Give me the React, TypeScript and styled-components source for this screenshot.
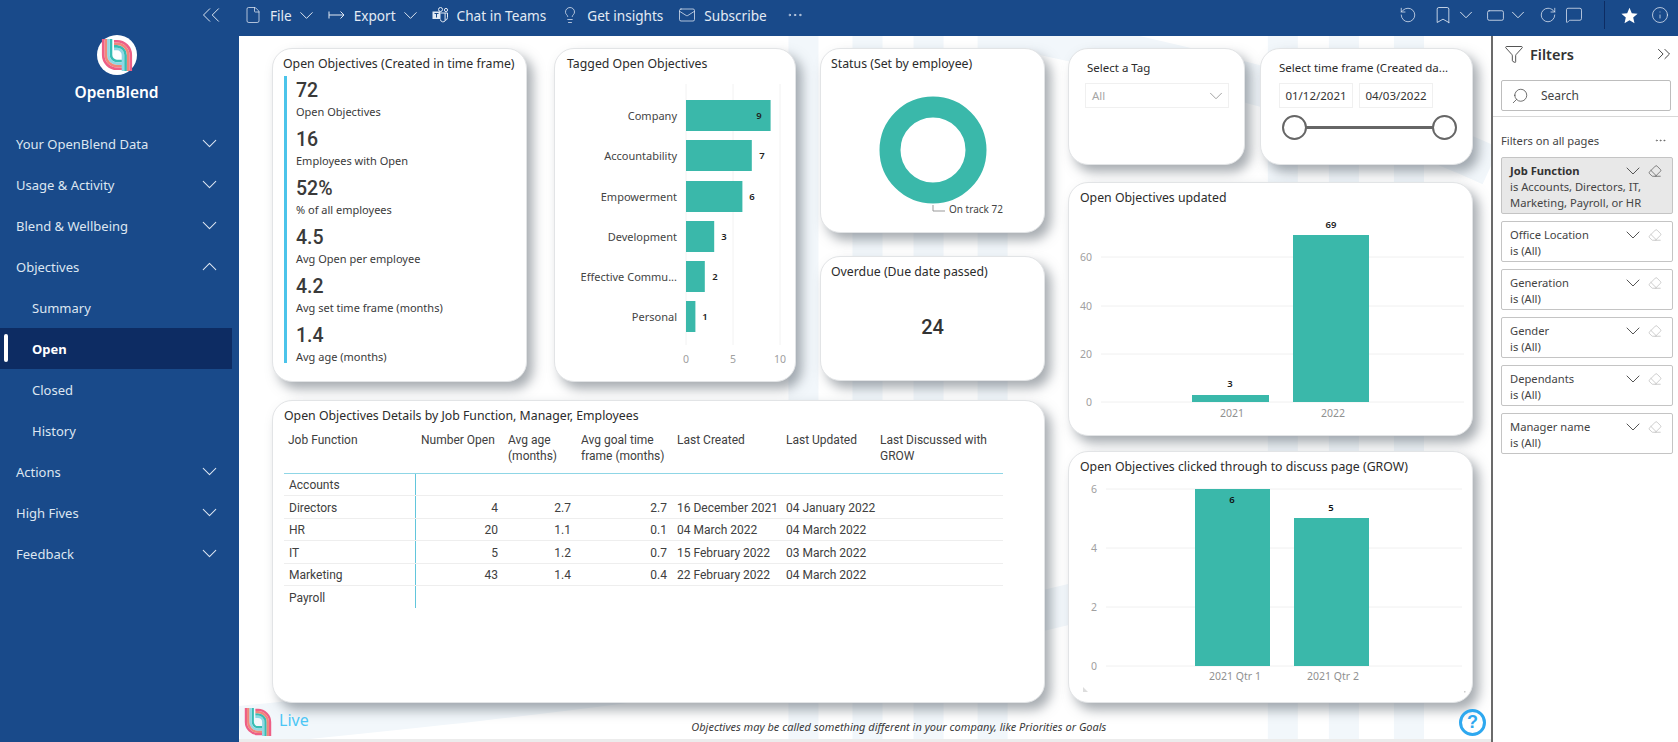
import React from 'react';
import styled, { createGlobalStyle } from 'styled-components';
import {
  Bookmark, ChevronDown, ChevronUp, ChevronsLeft, ChevronsRight, Eraser, File, Filter, Info, Lightbulb, Mail,
  MessageSquare, MoreHorizontal, RectangleHorizontal, RotateCcw, RotateCw, Search,
} from 'lucide-react';

const TEAL = '#3ab8aa';
const FONT = '"Noto Sans", "Open Sans", sans-serif';

const Global = createGlobalStyle`
  html, body { margin: 0; padding: 0; background: #fff; }
  body { font-family: ${FONT}; overflow: hidden; }
  * { box-sizing: border-box; }
`;

const Page = styled.div`display: flex; width: 1678px; height: 742px; overflow: hidden;`;

/* ---------- sidebar ---------- */
const Sidebar = styled.aside`
  width: 239px; flex: none; background: #194a8a; color: #e6edf5; display: flex; flex-direction: column;
`;
const CollapseRow = styled.div`height: 36px; display: flex; align-items: center; justify-content: flex-end; padding: 0 13px 6px 0; color: #dbe5f1;`;
const Brand = styled.div`height: 72px; margin-top: -1px; display: flex; flex-direction: column; align-items: center; margin-right: 6px;`;
const BrandName = styled.div`font-size: 15.5px; font-weight: 600; color: #fff; line-height: 22px; margin-top: 6px;`;
const Nav = styled.nav`margin-top: 16px; display: flex; flex-direction: column;`;
const NavRow = styled.div<{ $sub?: boolean; $active?: boolean }>`
  position: relative; height: 41px; width: 232px; display: flex; align-items: center; justify-content: space-between;
  padding: 0 10px 0 ${p => (p.$sub ? '32px' : '16px')};
  font-size: 13px; font-weight: ${p => (p.$active ? 700 : 400)}; color: ${p => (p.$active ? '#fff' : '#dde6f1')};
  background: ${p => (p.$active ? '#0d2c63' : 'transparent')};
`;
const ActiveMark = styled.span`position: absolute; left: 4px; top: 6px; width: 4px; height: 28px; border-radius: 2px; background: #fff;`;

/* ---------- toolbar ---------- */
const Right = styled.div`flex: 1; min-width: 0; display: flex; flex-direction: column;`;
const Toolbar = styled.header`height: 36px; flex: none; background: #194a8a; display: flex; align-items: center; padding: 0 9px 6px 5px; color: #e3eaf4;`;
const ToolGroup = styled.div<{ $ml?: number }>`display: flex; align-items: center; margin-right: 15px; gap: 8px; margin-left: ${p => p.$ml ?? 0}px;`;
const ToolLabel = styled.span`font-size: 13.6px; white-space: nowrap;`;
const ToolChevron = styled(ChevronDown)`margin: 0 -5px; flex: none;`;
const ToolRight = styled.div`margin-left: auto; display: flex; align-items: center;`;
const ToolIcon = styled.span<{ $ml: number }>`display: flex; margin-left: ${p => p.$ml}px;`;
const ToolDivider = styled.span`width: 1px; height: 28px; background: #0d2c63; margin-left: 21px;`;

/* ---------- body ---------- */
const Body = styled.div`flex: 1; min-height: 0; display: flex;`;
const Main = styled.main`
  position: relative; flex: 1; min-width: 0; display: flex; flex-direction: column; background: #fff; border-bottom: 3px solid #ececec;
`;
const Watermark = styled.svg`position: absolute; inset: 0; width: 100%; height: 100%;`;
const Canvas = styled.div`position: relative; display: flex; gap: 23px; padding: 12px 0 0 33px; height: 667px;`;
const LeftBlock = styled.div`display: flex; flex-direction: column; gap: 18px; width: 773px;`;
const TopRow = styled.div`display: flex; height: 334px;`;
const Stack = styled.div`display: flex; flex-direction: column; gap: 23px; width: 225px;`;
const RightBlock = styled.div`display: flex; flex-direction: column; width: 405px;`;
const SlicerRow = styled.div`display: flex; gap: 15px; height: 117px; margin-bottom: 17px;`;

const Card = styled.section<{ $w?: number; $h?: number; $mb?: number; $mr?: number }>`
  display: flex; flex-direction: column; background: #fff; border: 1px solid #e2e4e6; border-radius: 20px; overflow: visible;
  box-shadow: 6px 7px 12px rgba(80, 90, 100, 0.5);
  ${p => (p.$w ? `width: ${p.$w}px; flex: none;` : '')}
  ${p => (p.$h ? `height: ${p.$h}px; flex: none;` : '')}
  ${p => (p.$mb ? `margin-bottom: ${p.$mb}px;` : '')}
  ${p => (p.$mr ? `margin-right: ${p.$mr}px;` : '')}
`;
const CardTitle = styled.h3<{ $pl?: number }>`
  margin: 5px 0 0; padding-left: ${p => p.$pl ?? 10}px; height: 20px; line-height: 20px; font-size: 12.3px; font-weight: 400; color: #2b2b2b; white-space: nowrap;
`;
const Chart = styled.svg`display: block; font-family: ${FONT};`;

const Kpis = styled.div`margin: 2px 0 0 11px; padding-left: 9px; height: 287px; border-left: 3px solid #4cc4ea; display: flex; flex-direction: column; gap: 7px;`;
const Kpi = styled.div`height: 42px; padding-top: 2px;`;
const KpiValue = styled.div`font-family: Roboto, sans-serif; font-size: 19.5px; font-weight: 500; line-height: 26px; color: #3a3a3a;`;
const KpiLabel = styled.div`font-size: 11px; line-height: 16px; color: #3a3a3a;`;

const BigNumber = styled.div`flex: 1; display: flex; align-items: center; justify-content: center; font-family: Roboto, sans-serif; font-size: 20px; font-weight: 500; color: #333; padding-bottom: 8px;`;

const SlicerTitle = styled(CardTitle)`margin-top: 9px; font-size: 11.5px; padding-left: 18px;`;
const Dropdown = styled.div`
  margin: 5px 15px 0 16px; height: 25px; border: 1px solid #f0f0f0; display: flex; align-items: center; justify-content: space-between;
  padding: 0 1px 0 6px; color: #a6a6a6; font-size: 11.5px;
`;
const Dates = styled.div`display: flex; gap: 6px; margin: 5px 0 0 18px;`;
const DateBox = styled.div`width: 74px; height: 25px; border: 1px solid #f0f0f0; display: flex; align-items: center; justify-content: center; font-size: 11.5px; color: #333;`;
const Slider = styled.div`position: relative; margin: 18px 0 0 33px; width: 151px; height: 3px; background: #666;`;
const Handle = styled.span<{ $end?: boolean }>`
  position: absolute; top: -11px; ${p => (p.$end ? 'right: -12px;' : 'left: -12px;')}
  width: 25px; height: 25px; border-radius: 50%; background: #fff; border: 2px solid #666;
`;

/* ---------- table ---------- */
const TableCard = styled(Card)`flex: 1; height: 303px;`;
const TableTitle = styled(CardTitle)`padding-left: 11px; font-size: 12.3px;`;
const DataTable = styled.table`
  margin: 3px 0 0 11px; width: 719px; table-layout: fixed; border-collapse: collapse; font-family: Roboto, sans-serif; font-size: 12px; color: #404040;
`;
const Th = styled.th<{ $w: number }>`
  width: ${p => p.$w}px; height: 44px; vertical-align: top; text-align: left; font-weight: 400; line-height: 15.5px; padding: 4px 4px 0 4px;
  border-bottom: 1px solid #8fd6e6; color: #404040;
  &:nth-child(2) { padding-left: 6px; }
`;
const Td = styled.td<{ $num?: boolean; $first?: boolean }>`
  height: 22.5px; padding: 2px 6px 0 4px; white-space: nowrap; overflow: visible; text-align: ${p => (p.$num ? 'right' : 'left')};
  border-bottom: 1px solid #eeeeee; ${p => (p.$first ? 'border-right: 1px solid #62c6dc; padding-left: 5px;' : '')}
`;
const LastRow = styled.tr`td { border-bottom: none; }`;

/* ---------- footer ---------- */
const Footer = styled.div`position: relative; flex: 1; display: flex; align-items: center; padding: 2px 5px 0 5px;`;
const LiveLabel = styled.span`margin: 0 0 5px 7px; font-size: 16px; color: #4cc6f5;`;
const Note = styled.div`flex: 1; text-align: center; padding-left: 30px; margin-top: 9px; font-size: 11px; font-style: italic; color: #3a3a3a;`;
const Help = styled.span`
  width: 27px; height: 27px; border-radius: 50%; border: 3px solid #2ea8ef; color: #2ea8ef; font-size: 18px; font-weight: 700; line-height: 21px; text-align: center; font-family: "Liberation Sans", sans-serif;
`;

/* ---------- filters ---------- */
const Pane = styled.aside`width: 187px; flex: none; background: #fff; border-left: 2px solid #6b6b6b; display: flex; flex-direction: column;`;
const PaneHead = styled.div`height: 36px; display: flex; align-items: center; padding: 0 3px 0 11px; color: #333;`;
const PaneTitle = styled.div`margin-left: 6px; font-size: 14.5px; font-weight: 600; flex: 1; color: #333;`;
const SearchBox = styled.div`
  margin: 8px 7px 0 8px; height: 31px; border: 1px solid #bdbdbd; border-radius: 2px; display: flex; align-items: center; gap: 12px; padding-left: 9px; font-size: 12px; color: #444;
`;
const PaneRule = styled.div`height: 1px; background: #d8d8d8; margin-top: 5px;`;
const PaneSection = styled.div`display: flex; align-items: center; justify-content: space-between; margin: 14px 11px 0 8px; height: 18px; font-size: 11.2px; color: #444;`;
const FilterList = styled.div`display: flex; flex-direction: column; gap: 7px; margin: 8px 5px 0 8px;`;
const FilterCard = styled.div<{ $active?: boolean }>`
  position: relative; height: ${p => (p.$active ? 57 : 41)}px; padding: 4px 10px 0 8px; font-size: 11.2px; line-height: 16px; color: #444; border-radius: 2px;
  border: 1px solid #c4c4c4; background: ${p => (p.$active ? '#e8e8e8' : '#fff')};
`;
const FilterName = styled.div<{ $active?: boolean }>`display: flex; justify-content: space-between; align-items: center; height: 17px; font-weight: ${p => (p.$active ? 700 : 400)}; color: ${p => (p.$active ? '#333' : '#444')};`;
const FilterIcons = styled.span<{ $dark?: boolean }>`display: flex; align-items: center; gap: 3px; color: #555; svg:last-child { color: ${p => (p.$dark ? '#333' : '#aaa')}; }`;
const FilterChevron = styled(ChevronDown)`margin: -4px 0;`;

/* ---------- drawings ---------- */
function LogoStripes() {
  const left = [['#37bdb4', 6], ['#8ed8e4', 8.6], ['#f0877a', 11.2], ['#ee5f86', 13.8]] as const;
  const arch = [['#8ed8e4', 6], ['#37bdb4', 8.6], ['#f0877a', 11.2], ['#ee5f86', 13.8]] as const;
  return (
    <g fill="none" strokeWidth="2.6">
      {left.map(([c, r]) => <path key={r} stroke={c} d={`M${-r} -16 L${-r} 0 A${r} ${r} 0 0 0 0 ${r} L5 ${r}`} />)}
      {arch.map(([c, r]) => <path key={r} stroke={c} d={`M-3 ${-r} L0 ${-r} A${r} ${r} 0 0 1 ${r} 0 L${r} 16`} />)}
    </g>
  );
}
function Logo() {
  return (
    <svg width="40" height="40" viewBox="-20 -20 40 40" style={{ display: 'block' }}>
      <circle cx="0" cy="0" r="20" fill="#fff" />
      <LogoStripes />
    </svg>
  );
}
function LiveLogo() {
  return (
    <svg width="28" height="28" viewBox="-16 -16 32 32" style={{ display: 'block' }}><LogoStripes /></svg>
  );
}
function ExportIcon() {
  return (
    <svg width="18" height="12" viewBox="0 0 18 12" fill="none" stroke="currentColor" strokeWidth="1">
      <path d="M1 2.5v7M1 6h15M12.5 2.5 16 6l-3.5 3.5" />
    </svg>
  );
}
function TeamsIcon() {
  return (
    <svg width="17" height="16" viewBox="0 0 17 16" fill="none" stroke="currentColor" strokeWidth="1">
      <rect x="0.5" y="4.5" width="8" height="7.5" fill="currentColor" stroke="none" />
      <path d="M2.5 6.5h4M4.5 6.5v4" stroke="#194a8a" />
      <circle cx="8.5" cy="2.5" r="2" />
      <circle cx="14" cy="3" r="1.6" />
      <path d="M8.5 6h7v4.5a3 3 0 0 1-2.4 2.9M8.5 12.5v.5a2.6 2.6 0 0 0 4.6.8V6" />
    </svg>
  );
}
function StarIcon() {
  return (
    <svg width="17" height="17" viewBox="0 0 17 17" fill="#fff">
      <path d="M8.5 0.8 10.8 6.2 16.6 6.7 12.2 10.5 13.5 16.2 8.5 13.2 3.5 16.2 4.8 10.5 0.4 6.7 6.2 6.2Z" />
    </svg>
  );
}
const stroke = 1;

/* ---------- data ---------- */
const NAV: { label: string; sub?: boolean; active?: boolean; open?: boolean; leaf?: boolean }[] = [
  { label: 'Your OpenBlend Data' }, { label: 'Usage & Activity' }, { label: 'Blend & Wellbeing' }, { label: 'Objectives', open: true },
  { label: 'Summary', sub: true, leaf: true }, { label: 'Open', sub: true, leaf: true, active: true }, { label: 'Closed', sub: true, leaf: true }, { label: 'History', sub: true, leaf: true },
  { label: 'Actions' }, { label: 'High Fives' }, { label: 'Feedback' },
];
const KPIS = [
  ['72', 'Open Objectives'], ['16', 'Employees with Open'], ['52%', '% of all employees'],
  ['4.5', 'Avg Open per employee'], ['4.2', 'Avg set time frame (months)'], ['1.4', 'Avg age (months)'],
];
const TAGS: [string, number, number, number][] = [
  ['Company', 9, 100, 759], ['Accountability', 7, 140, 762], ['Empowerment', 6, 181, 752],
  ['Development', 3, 221, 724], ['Effective Commu...', 2, 261, 715], ['Personal', 1, 301, 705],
];
const COLS: [React.ReactNode, number][] = [
  ['Job Function', 131], ['Number Open', 89], [<>Avg age<br />(months)</>, 73],
  [<>Avg goal time<br />frame (months)</>, 96], ['Last Created', 109], ['Last Updated', 94], [<>Last Discussed with<br />GROW</>, 127],
];
const ROWS = [
  ['Accounts', '', '', '', '', '', ''],
  ['Directors', '4', '2.7', '2.7', '16 December 2021', '04 January 2022', ''],
  ['HR', '20', '1.1', '0.1', '04 March 2022', '04 March 2022', ''],
  ['IT', '5', '1.2', '0.7', '15 February 2022', '03 March 2022', ''],
  ['Marketing', '43', '1.4', '0.4', '22 February 2022', '04 March 2022', ''],
];
const FILTERS = ['Office Location', 'Generation', 'Gender', 'Dependants', 'Manager name'];
const STRIPES = [803 - 239, 867 - 239, 928 - 239, 992 - 239, 1282 - 239, 1343 - 239, 1408 - 239];

export default function App() {
  return (
    <Page>
      <Global />
      <Sidebar>
        <CollapseRow><ChevronsLeft size={30} strokeWidth={0.8} /></CollapseRow>
        <Brand>
          <Logo />
          <BrandName>OpenBlend</BrandName>
        </Brand>
        <Nav>
          {NAV.map(n => (
            <NavRow key={n.label} $sub={n.sub} $active={n.active}>
              {n.active && <ActiveMark />}
              {n.label}
              {!n.leaf && (n.open ? <ChevronUp size={25} strokeWidth={stroke} /> : <ChevronDown size={25} strokeWidth={stroke} />)}
            </NavRow>
          ))}
        </Nav>
      </Sidebar>

      <Right>
        <Toolbar>
          <ToolGroup><File size={18} strokeWidth={stroke} /><ToolLabel>File</ToolLabel><ToolChevron size={23} strokeWidth={stroke} /></ToolGroup>
          <ToolGroup><ExportIcon /><ToolLabel>Export</ToolLabel><ToolChevron size={23} strokeWidth={stroke} /></ToolGroup>
          <ToolGroup><TeamsIcon /><ToolLabel>Chat in Teams</ToolLabel></ToolGroup>
          <ToolGroup><Lightbulb size={18} strokeWidth={stroke} /><ToolLabel>Get insights</ToolLabel></ToolGroup>
          <ToolGroup><Mail size={18} strokeWidth={stroke} /><ToolLabel>Subscribe</ToolLabel></ToolGroup>
          <ToolGroup $ml={4}><MoreHorizontal size={18} strokeWidth={stroke} /></ToolGroup>
          <ToolRight>
            <ToolIcon $ml={0}><RotateCcw size={18} strokeWidth={stroke} /></ToolIcon>
            <ToolIcon $ml={16}><Bookmark size={20} strokeWidth={stroke} /></ToolIcon>
            <ToolIcon $ml={2}><ChevronDown size={22} strokeWidth={stroke} /></ToolIcon>
            <ToolIcon $ml={9}><RectangleHorizontal size={19} strokeWidth={stroke} /></ToolIcon>
            <ToolIcon $ml={2}><ChevronDown size={22} strokeWidth={stroke} /></ToolIcon>
            <ToolIcon $ml={10}><RotateCw size={18} strokeWidth={stroke} /></ToolIcon>
            <ToolIcon $ml={8}><MessageSquare size={18} strokeWidth={stroke} /></ToolIcon>
            <ToolDivider />
            <ToolIcon $ml={16}><StarIcon /></ToolIcon>
            <ToolIcon $ml={13}><Info size={18} strokeWidth={stroke} /></ToolIcon>
          </ToolRight>
        </Toolbar>

        <Body>
          <Main>
            <Watermark viewBox="0 0 1251 703" preserveAspectRatio="none" fill="none" stroke="#f2f7fb" strokeWidth="30">
              {STRIPES.map(x => <path key={x} d={`M${x} 0V703`} />)}
              <path d="M760 -10C900 20 1100 60 1251 130" strokeWidth="40" />
              <path d="M0 690C300 660 700 620 1000 520" strokeWidth="40" />
            </Watermark>
            <Canvas>
              <LeftBlock>
                <TopRow>
                  <Card $w={255} $mr={27}>
                    <CardTitle>Open Objectives (Created in time frame)</CardTitle>
                    <Kpis>
                      {KPIS.map(([v, l]) => (
                        <Kpi key={l}><KpiValue>{v}</KpiValue><KpiLabel>{l}</KpiLabel></Kpi>
                      ))}
                    </Kpis>
                  </Card>
                  <Card $w={242} $mr={24}>
                    <CardTitle $pl={12}>Tagged Open Objectives</CardTitle>
                    <Chart width="240" height="307" viewBox="555 74 240 307">
                      {[686, 733, 780].map(x => <line key={x} x1={x} x2={x} y1="84" y2="345" stroke="#f2f2f2" />)}
                      {TAGS.map(([label, v, y, lx]) => (
                        <g key={label}>
                          <rect x="686" y={y} width={v * 9.4} height="31" fill={TEAL} />
                          <text x="677" y={y + 20} textAnchor="end" fontSize="11" fill="#444">{label}</text>
                          <text x={lx} y={y + 19} textAnchor="middle" fontSize="9.5" fontWeight="600" fill="#222">{v}</text>
                        </g>
                      ))}
                      {[[686, '0'], [733, '5'], [780, '10']].map(([x, t]) => (
                        <text key={t} x={x} y="363" textAnchor="middle" fontSize="10.5" fill="#a0a0a0">{t}</text>
                      ))}
                    </Chart>
                  </Card>
                  <Stack>
                    <Card $h={185}>
                      <CardTitle>Status (Set by employee)</CardTitle>
                      <Chart width="223" height="158" viewBox="821 74 223 158">
                        <circle cx="933" cy="150" r="43" fill="none" stroke={TEAL} strokeWidth="21" />
                        <path d="M933 205v6h12" fill="none" stroke="#999" />
                        <text x="949" y="213" fontSize="10" fill="#444">On track 72</text>
                      </Chart>
                    </Card>
                    <Card $h={125}>
                      <CardTitle>Overdue (Due date passed)</CardTitle>
                      <BigNumber>24</BigNumber>
                    </Card>
                  </Stack>
                </TopRow>
                <TableCard>
                  <TableTitle>Open Objectives Details by Job Function, Manager, Employees</TableTitle>
                  <DataTable>
                    <thead>
                      <tr>{COLS.map(([h, w], i) => <Th key={i} $w={w}>{h}</Th>)}</tr>
                    </thead>
                    <tbody>
                      {ROWS.map(r => (
                        <tr key={r[0]}>
                          {r.map((c, i) => <Td key={i} $first={i === 0} $num={i > 0 && i < 4}>{c}</Td>)}
                        </tr>
                      ))}
                      <LastRow>
                        <Td $first>Payroll</Td><Td /><Td /><Td /><Td /><Td /><Td />
                      </LastRow>
                    </tbody>
                  </DataTable>
                </TableCard>
              </LeftBlock>

              <RightBlock>
                <SlicerRow>
                  <Card $w={177}>
                    <SlicerTitle>Select a Tag</SlicerTitle>
                    <Dropdown>All<ChevronDown size={22} strokeWidth={stroke} color="#999" /></Dropdown>
                  </Card>
                  <Card $w={213}>
                    <SlicerTitle>Select time frame (Created da...</SlicerTitle>
                    <Dates><DateBox>01/12/2021</DateBox><DateBox>04/03/2022</DateBox></Dates>
                    <Slider><Handle /><Handle $end /></Slider>
                  </Card>
                </SlicerRow>
                <Card $h={254} $mb={15}>
                  <CardTitle $pl={11}>Open Objectives updated</CardTitle>
                  <Chart width="403" height="227" viewBox="1069 208 403 227">
                    {[[257, '60'], [306, '40'], [354, '20'], [402, '0']].map(([y, t]) => (
                      <g key={t}>
                        <line x1="1101" x2="1464" y1={y} y2={y} stroke="#f0f0f0" />
                        <text x="1092" y={Number(y) + 4} textAnchor="end" fontSize="10.5" fill="#a0a0a0">{t}</text>
                      </g>
                    ))}
                    <rect x="1192" y="395" width="77" height="7" fill={TEAL} />
                    <rect x="1293" y="235" width="76" height="167" fill={TEAL} />
                    <text x="1230" y="387" textAnchor="middle" fontSize="9.5" fontWeight="600" fill="#222">3</text>
                    <text x="1331" y="228" textAnchor="middle" fontSize="9.5" fontWeight="600" fill="#222">69</text>
                    <text x="1232" y="417" textAnchor="middle" fontSize="10.5" fill="#909090">2021</text>
                    <text x="1333" y="417" textAnchor="middle" fontSize="10.5" fill="#909090">2022</text>
                  </Chart>
                </Card>
                <Card $h={252}>
                  <CardTitle $pl={11}>Open Objectives clicked through to discuss page (GROW)</CardTitle>
                  <Chart width="403" height="225" viewBox="1069 478 403 225">
                    {[[490, '6'], [549, '4'], [608, '2'], [667, '0']].map(([y, t]) => (
                      <g key={t}>
                        <line x1="1106" x2="1462" y1={y} y2={y} stroke="#f0f0f0" />
                        <text x="1097" y={Number(y) + 4} textAnchor="end" fontSize="10.5" fill="#a0a0a0">{t}</text>
                      </g>
                    ))}
                    <rect x="1195" y="490" width="75" height="177" fill={TEAL} />
                    <rect x="1294" y="519" width="75" height="148" fill={TEAL} />
                    <text x="1232" y="504" textAnchor="middle" fontSize="9.5" fontWeight="600" fill="#111">6</text>
                    <text x="1331" y="512" textAnchor="middle" fontSize="9.5" fontWeight="600" fill="#111">5</text>
                    <text x="1235" y="681" textAnchor="middle" fontSize="10.5" fill="#909090">2021 Qtr 1</text>
                    <text x="1333" y="681" textAnchor="middle" fontSize="10.5" fill="#909090">2021 Qtr 2</text>
                    <polygon points="1083,688 1083,693 1088,693" fill="#dddddd" />
                    <rect x="1464" y="692" width="1.5" height="1.5" fill="#cccccc" />
                  </Chart>
                </Card>
              </RightBlock>
            </Canvas>
            <Footer>
              <LiveLogo />
              <LiveLabel>Live</LiveLabel>
              <Note>Objectives may be called something different in your company, like Priorities or Goals</Note>
              <Help>?</Help>
            </Footer>
          </Main>

          <Pane>
            <PaneHead>
              <Filter size={20} strokeWidth={stroke} />
              <PaneTitle>Filters</PaneTitle>
              <ChevronsRight size={22} strokeWidth={stroke} />
            </PaneHead>
            <SearchBox><Search size={18} strokeWidth={stroke} style={{ transform: 'scaleX(-1)' }} />Search</SearchBox>
            <PaneRule />
            <PaneSection>Filters on all pages<MoreHorizontal size={13} strokeWidth={stroke} /></PaneSection>
            <FilterList>
              <FilterCard $active>
                <FilterName $active>Job Function
                  <FilterIcons $dark><FilterChevron size={24} strokeWidth={stroke} /><Eraser size={14} strokeWidth={stroke} /></FilterIcons>
                </FilterName>
                is Accounts, Directors, IT,<br />Marketing, Payroll, or HR
              </FilterCard>
              {FILTERS.map(f => (
                <FilterCard key={f}>
                  <FilterName>{f}
                    <FilterIcons><FilterChevron size={24} strokeWidth={stroke} /><Eraser size={14} strokeWidth={stroke} /></FilterIcons>
                  </FilterName>
                  is (All)
                </FilterCard>
              ))}
            </FilterList>
          </Pane>
        </Body>
      </Right>
    </Page>
  );
}
